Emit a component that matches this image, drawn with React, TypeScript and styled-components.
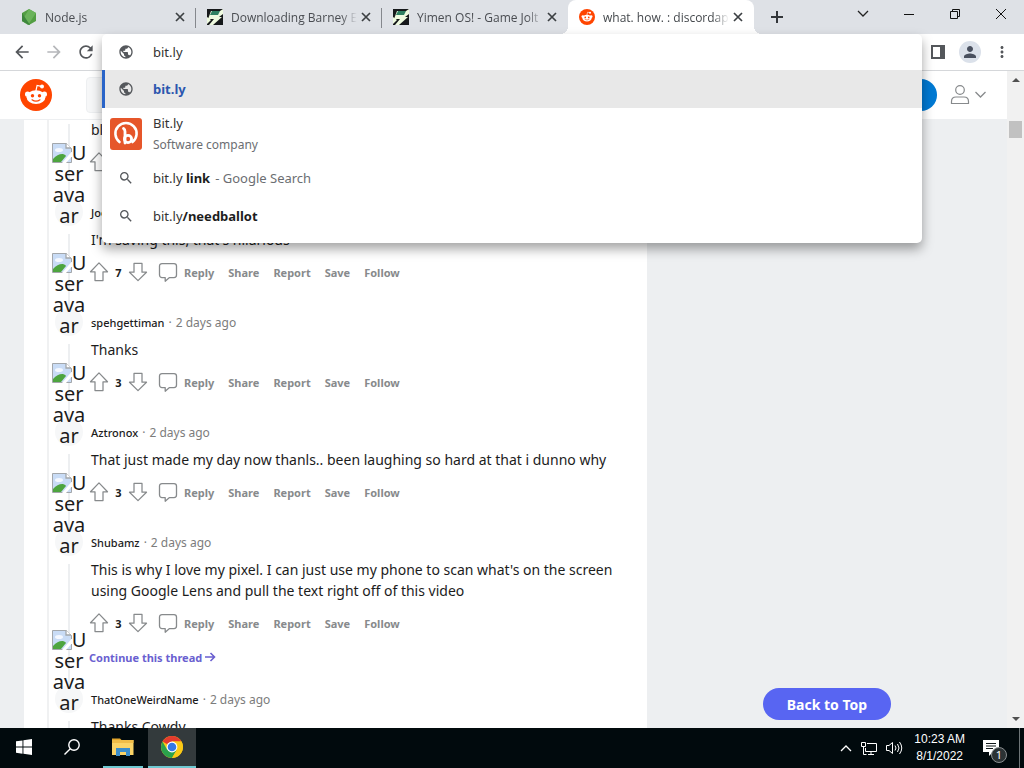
import React from "react";
import styled, { createGlobalStyle, css } from "styled-components";
import { MdPublic, MdSearch, MdPerson, MdArrowBack, MdArrowForward, MdRefresh, MdMoreVert } from "react-icons/md";

const GlobalStyle = createGlobalStyle`
  * { box-sizing: border-box; }
  body { margin: 0; font-family: "Noto Sans", "Open Sans", sans-serif; color: #1c1c1c; }
  button { font: inherit; color: inherit; background: none; border: 0; padding: 0; cursor: pointer; }
  a { color: inherit; text-decoration: none; }
  svg { display: block; flex: none; }
`;

const Desktop = styled.div`
  display: flex;
  flex-direction: column;
  height: 100vh;
  overflow: hidden;
`;

/* ---------- tab strip ---------- */
const TabStrip = styled.header`
  display: flex;
  flex: none;
  height: 34px;
  padding-left: 10px;
  background: #dee1e6;
`;
const Tab = styled.div<{ $active?: boolean; $divider?: boolean }>`
  display: flex;
  align-items: center;
  flex: 0 1 186px;
  min-width: 0;
  padding: 0 11px;
  font-family: "Open Sans", sans-serif;
  font-size: 12px;
  color: #4a4d52;
  position: relative;
  ${(p) =>
    p.$active &&
    css`
      background: #fff;
      border-radius: 8px 8px 0 0;
      color: #45494d;
      &::before, &::after {
        content: "";
        position: absolute;
        bottom: 0;
        width: 8px;
        height: 8px;
      }
      &::before { left: -8px; background: radial-gradient(circle at 0 0, transparent 8px, #fff 8px); }
      &::after { right: -8px; background: radial-gradient(circle at 100% 0, transparent 8px, #fff 8px); }
    `}
  ${(p) =>
    p.$divider &&
    css`
      &::after {
        content: "";
        position: absolute;
        right: 0;
        top: 8px;
        width: 1px;
        height: 20px;
        background: #85888d;
      }
    `}
`;
const TabTitle = styled.span`
  flex: 1;
  min-width: 0;
  margin: 0 4px 0 8px;
  overflow: hidden;
  white-space: nowrap;
  mask-image: linear-gradient(to right, #000 calc(100% - 16px), transparent);
`;
const IconButton = styled.button<{ $w?: number }>`
  display: flex;
  align-items: center;
  justify-content: center;
  flex: none;
  gap: 3px;
  width: ${(p) => (p.$w ? `${p.$w}px` : "auto")};
`;
const WindowControls = styled.div`
  display: flex;
  margin-left: auto;
  height: 28px;
`;

/* ---------- toolbar and suggestions ---------- */
const Toolbar = styled.div`
  display: flex;
  align-items: center;
  justify-content: space-between;
  flex: none;
  height: 37px;
  padding: 0 6px;
  background: #fff;
  border-bottom: 1px solid #d5d7da;
  color: #54575b;
  position: relative;
  z-index: 5;
`;
const ToolGroup = styled.div`
  display: flex;
  align-items: center;
`;
const Profile = styled.span`
  display: flex;
  align-items: center;
  justify-content: center;
  width: 22px;
  height: 22px;
  border-radius: 50%;
  background: #dbe1ea;
  color: #49505f;
`;
const Omnibox = styled.div`
  position: absolute;
  top: 0;
  left: 102px;
  right: 102px;
  padding-bottom: 8px;
  background: #fff;
  border-radius: 5px;
  box-shadow: 0 6px 12px rgba(0, 0, 0, 0.36);
  font-size: 13px;
  color: #333;
`;
const OmniRow = styled.div<{ $tall?: boolean; $selected?: boolean }>`
  display: grid;
  grid-template-columns: 48px 1fr;
  align-items: center;
  height: ${(p) => (p.$tall ? 51 : 38)}px;
  ${(p) =>
    p.$selected &&
    css`
      background: #e8e8e8;
      box-shadow: inset 3px 0 #2964c8;
      color: #2b56ae;
      font-weight: 700;
    `}
  svg { margin: 0 auto; color: #55585c; }
`;
const OmniField = styled(OmniRow).attrs({ as: "label" })`
  height: 36px;
`;
const OmniInput = styled.input`
  width: 100%;
  border: 0;
  outline: 0;
  padding: 0 3px;
  background: none;
  font: inherit;
  color: inherit;
`;
const OmniText = styled.div`
  padding-left: 3px;
  line-height: 21px;
  b { color: #1d1d1d; }
`;
const Source = styled.span`
  padding-left: 5px;
  color: #6b6e72;
`;
const Description = styled.div`
  font-size: 12px;
  color: #6b6e72;
`;

/* ---------- page ---------- */
const Page = styled.div`
  display: flex;
  flex: 1;
  min-height: 0;
`;
const Site = styled.div`
  display: flex;
  flex-direction: column;
  flex: 1;
  min-width: 0;
  overflow: hidden;
  background: #edeff1;
`;
const SiteHeader = styled.div`
  display: flex;
  align-items: center;
  flex: none;
  height: 49px;
  padding: 0 20px;
  background: #fff;
  border-bottom: 1px solid #edeff1;
  position: relative;
  z-index: 2;
`;
const SearchBox = styled.input`
  flex: 1;
  height: 36px;
  margin: 0 40px 0 34px;
  border: 1px solid #edeff1;
  border-radius: 4px;
  background: #f6f7f8;
`;
const LogIn = styled.button`
  width: 96px;
  height: 32px;
  margin-right: 12px;
  border-radius: 16px;
  background: #0079d3;
`;
const Columns = styled.div`
  display: flex;
  flex: 1;
  min-height: 0;
`;
const Thread = styled.main`
  flex: 1;
  margin: -32px 0 0 24px;
  padding-left: 23px;
  background: #fff;
`;
const CommentList = styled.div`
  padding-left: 4px;
  border-left: 2px solid #f0f1f2;
`;
const Sidebar = styled.aside`
  display: flex;
  flex: none;
  width: 360px;
  align-items: flex-end;
  justify-content: center;
  padding-bottom: 8px;
`;
const BackToTop = styled.button`
  width: 128px;
  height: 32px;
  border-radius: 16px;
  background: #5865f2;
  color: #fff;
  font-size: 14px;
  font-weight: 700;
`;
const CommentRow = styled.article`
  display: grid;
  grid-template-columns: 30px 1fr;
  column-gap: 8px;
`;
const Rail = styled.div`
  display: flex;
  flex-direction: column;
  align-items: center;
  padding-left: 2px;
`;
const Avatar = styled.div`
  position: relative;
  flex: none;
  width: 28px;
  height: 28px;
  border-radius: 50%;
  background: #f6f7f8;
`;
const AltText = styled.div`
  position: absolute;
  bottom: 0;
  left: 50%;
  width: 36px;
  margin-left: -18px;
  font-size: 20px;
  line-height: 21px;
  text-align: center;
  white-space: nowrap;
  z-index: 1;
`;
const AltLine = styled.span`
  display: flex;
  justify-content: center;
`;
const RailLine = styled.div`
  flex: 1;
  width: 2px;
  margin-top: 8px;
  background: #edeff1;
`;
const CommentBody = styled.div<{ $tight?: boolean }>`
  padding-bottom: ${(p) => (p.$tight ? 10 : 20)}px;
`;
const Byline = styled.div`
  display: flex;
  align-items: center;
  height: 28px;
  gap: 4px;
  font-size: 12px;
  color: #7c7c7c;
`;
const Author = styled.a`
  font-size: 11px;
  font-weight: 500;
  color: #1c1c1c;
`;
const CommentText = styled.p`
  margin: 0;
  padding: 3px 0 6px;
  max-width: 540px;
  font-size: 14px;
  line-height: 21px;
`;
const Actions = styled.div`
  display: flex;
  align-items: center;
  height: 32px;
  gap: 14px;
  margin-left: -2px;
  font-size: 11px;
  font-weight: 700;
  color: #878a8c;
`;
const Votes = styled.div`
  display: flex;
  align-items: center;
  margin-right: -4px;
`;
const Score = styled.span`
  width: 19px;
  text-align: center;
  color: #1c1c1c;
`;
const ActionButton = styled.button`
  display: flex;
  align-items: center;
  gap: 6px;
`;
const Continue = styled.a`
  display: flex;
  align-items: center;
  gap: 2px;
  height: 36px;
  margin-left: -2px;
  font-size: 11px;
  font-weight: 700;
  color: #6a5fd0;
`;
const Scrollbar = styled.div`
  display: flex;
  flex-direction: column;
  align-items: center;
  justify-content: space-between;
  flex: none;
  width: 17px;
  padding: 6px 0;
  background: #f1f1f1;
`;
const ScrollTrack = styled.div`
  flex: 1;
  width: 13px;
  padding-top: 39px;
  &::before { content: ""; display: block; height: 17px; background: #c1c1c1; }
`;

/* ---------- taskbar ---------- */
const Taskbar = styled.footer`
  display: flex;
  flex: none;
  height: 40px;
  background: #010a0d;
  color: #fff;
`;
const TaskButton = styled.button<{ $running?: boolean; $active?: boolean }>`
  display: flex;
  align-items: center;
  justify-content: center;
  width: ${(p) => (p.$running ? 40 : 48)}px;
  margin: 0 ${(p) => (p.$running ? "5px 0 7px" : 0)};
  border-bottom: 2px solid ${(p) => (p.$running || p.$active ? "#6fc9d2" : "transparent")};
  background: ${(p) => (p.$active ? "#333a3c" : "none")};
`;
const Tray = styled.div`
  display: flex;
  align-items: center;
  gap: 8px;
  margin-left: auto;
  padding-right: 10px;
`;
const Clock = styled.time`
  margin: 0 10px 0 3px;
  font-family: "Liberation Sans", "Open Sans", sans-serif;
  font-size: 12px;
  line-height: 17px;
  text-align: center;
`;
const Notice = styled.div`
  position: relative;
  width: 26px;
`;
const Badge = styled.span`
  position: absolute;
  left: 8px;
  top: 7px;
  width: 16px;
  height: 16px;
  border: 1px solid #8a8f91;
  border-radius: 50%;
  background: #2b3234;
  font-size: 11px;
  line-height: 14px;
  text-align: center;
`;
const ShowDesktop = styled.div`
  width: 5px;
  border-left: 1px solid #6d7577;
`;

/* ---------- drawings ---------- */
const Snoo = ({ size }: { size: number }) => (
  <svg width={size} height={size} viewBox="0 0 32 32">
    <circle cx="16" cy="16" r="16" fill="#ff4500" />
    <path d="M15.9 12l1.2-5.6 4.2.9" fill="none" stroke="#fff" strokeWidth="1.2" />
    <circle cx="22" cy="7.6" r="2" fill="#fff" />
    <circle cx="7.6" cy="15.2" r="2.6" fill="#fff" />
    <circle cx="24.4" cy="15.2" r="2.6" fill="#fff" />
    <ellipse cx="16" cy="18.2" rx="9.4" ry="6.9" fill="#fff" />
    <circle cx="12.5" cy="16.8" r="1.7" fill="#ff4500" />
    <circle cx="19.5" cy="16.8" r="1.7" fill="#ff4500" />
    <path d="M12 20.8q4 2.8 8 0" fill="none" stroke="#ff4500" strokeWidth="1.2" strokeLinecap="round" />
  </svg>
);
const NodeIcon = () => (
  <svg width="16" height="16" viewBox="0 0 16 16">
    <path d="M8 0l7 4v8l-7 4-7-4V4z" fill="#539e43" />
    <path d="M8 0l7 4-8 12-6-4z" fill="#6bb35b" />
    <path d="M1 4l8 12H8l-7-4z" fill="#3e863d" />
  </svg>
);
const JoltIcon = () => (
  <svg width="16" height="16" viewBox="0 0 16 16">
    <path d="M0 0h16v16H0z" fill="#16191b" />
    <path d="M4 2h9l3-2v5l-4 3h3l-9 8H2l5-6H1z" fill="#effbe0" />
    <path d="M5 2h8l-2 4H3z" fill="#2f8062" />
    <path d="M0 8l4 3-4 4z" fill="#effbe0" />
  </svg>
);
const Cross = () => (
  <svg width="10" height="10" viewBox="0 0 10 10" stroke="#3c4043" strokeWidth="1.7">
    <path d="M1 1l8 8M9 1L1 9" />
  </svg>
);
const BitlyIcon = () => (
  <svg width="32" height="32" viewBox="0 0 32 32">
    <rect width="32" height="32" rx="3" fill="#e6562a" />
    <g fill="none" stroke="#fff">
      <path d="M9.500 24A10.600 10.600 0 1 1 22.500 24" strokeWidth="2.600" strokeLinecap="round" />
      <path d="M13.500 10.500q1.500 1 1.500 3V25" strokeWidth="2.800" strokeLinecap="round" />
      <circle cx="18" cy="21" r="3.600" strokeWidth="2.800" />
    </g>
  </svg>
);
const Vote = ({ down }: { down?: boolean }) => (
  <svg width="20" height="20" viewBox="0 0 20 20" fill="none" stroke="#878a8c" strokeWidth="1.250" strokeLinejoin="round">
    <path d={down ? "M10 18.6L1.500 10.200H6V1.400h8v8.800h4.500z" : "M10 .9l8.500 8.900H14v8.700H6V9.800H1.500z"} />
  </svg>
);
const Bubble = () => (
  <svg width="20" height="20" viewBox="0 0 20 20" fill="none" stroke="#878a8c" strokeWidth="1.3" strokeLinejoin="round">
    <path d="M4 1.600h12a2.500 2.500 0 0 1 2.500 2.500v9a2.500 2.500 0 0 1-2.500 2.500h-4.500L7.200 19.200V15.600H4a2.500 2.500 0 0 1-2.500-2.500v-9A2.500 2.500 0 0 1 4 1.600z" />
  </svg>
);
const BrokenImage = () => (
  <svg width="20" height="21" viewBox="0 0 20 21">
    <path d="M.5 1.500h14l5 5v14H.5z" fill="#c9dcf6" stroke="#a3a7ab" />
    <ellipse cx="7" cy="8" rx="4" ry="2" fill="#f4f8ff" />
    <path d="M1 20v-3q5-5.500 10-5 3 1 3 2l-5 6z" fill="#4da53f" />
    <path d="M21 8L10 21h4l7-8z" fill="#fff" />
    <path d="M14 1v5h5" fill="#fff" stroke="#a3a7ab" strokeWidth="1.3" />
  </svg>
);
const Chevron = ({ w, up, color }: { w: number; up?: boolean; color: string }) => (
  <svg width={w} height="8" viewBox="0 0 12 8" fill="none" stroke={color} strokeWidth="1.3">
    <path d={up ? "M1 7l5-5 5 5" : "M1 1l5 5 5-5"} />
  </svg>
);
const ChromeIcon = () => (
  <svg width="22" height="22" viewBox="0 0 22 22">
    <circle cx="11" cy="11" r="11" fill="#fbc916" />
    <path d="M11 11L1.500 5.500A11 11 0 0 1 20.500 5.500H11z" fill="#e33b2e" />
    <path d="M1.500 5.500A11 11 0 0 0 11 22l5-8.500H6z" fill="#2ba24c" />
    <path d="M11 5.500h9.500A11 11 0 0 1 11 22l5-8.500z" fill="#fbc916" />
    <circle cx="11" cy="11" r="5.400" fill="#fff" />
    <circle cx="11" cy="11" r="4.300" fill="#3478e5" />
  </svg>
);
const FolderIcon = () => (
  <svg width="22" height="20" viewBox="0 0 22 20">
    <path d="M0 1.500h8l2 2H0z" fill="#e3a62c" />
    <path d="M0 3h21.500v15H0z" fill="#fbd467" />
    <path d="M0 3h21.500v3H0z" fill="#f0bd48" />
    <path d="M4 11h14v8h-4v-4H8v4H4z" fill="#3c8ecb" />
  </svg>
);

const CommentAvatar = () => (
  <Avatar>
    <AltText>
      <AltLine><BrokenImage />U</AltLine>
      <AltLine>ser</AltLine>
      <AltLine>ava</AltLine>
      <AltLine>ar</AltLine>
    </AltText>
  </Avatar>
);

type CommentData = { author: string; text: string; score: number; more?: boolean };
const comments: CommentData[] = [
  { author: "Cowdy", text: "bless you", score: 5 },
  { author: "Jooey", text: "I'm saving this, that's hilarious", score: 7 },
  { author: "spehgettiman", text: "Thanks", score: 3 },
  { author: "Aztronox", text: "That just made my day now thanls.. been laughing so hard at that i dunno why", score: 3 },
  {
    author: "Shubamz",
    text: "This is why I love my pixel. I can just use my phone to scan what's on the screen using Google Lens and pull the text right off of this video",
    score: 3,
    more: true,
  },
  { author: "ThatOneWeirdName", text: "Thanks Cowdy", score: 2 },
];

const Comment = ({ author, text, score, more }: CommentData) => (
  <CommentRow>
    <Rail>
      <CommentAvatar />
      <RailLine />
    </Rail>
    <CommentBody $tight={more}>
      <Byline>
        <Author href="#">{author}</Author>
        <span>·</span>
        <span>2 days ago</span>
      </Byline>
      <CommentText>{text}</CommentText>
      <Actions>
        <Votes>
          <IconButton aria-label="Upvote"><Vote /></IconButton>
          <Score>{score}</Score>
          <IconButton aria-label="Downvote"><Vote down /></IconButton>
        </Votes>
        <ActionButton><Bubble />Reply</ActionButton>
        <ActionButton>Share</ActionButton>
        <ActionButton>Report</ActionButton>
        <ActionButton>Save</ActionButton>
        <ActionButton>Follow</ActionButton>
      </Actions>
      {more && (
        <Continue href="#">
          Continue this thread
          <svg width="12" height="12" viewBox="0 0 12 12" fill="none" stroke="currentColor" strokeWidth="1.6">
            <path d="M1 6h9M6.500 2l4 4-4 4" />
          </svg>
        </Continue>
      )}
    </CommentBody>
  </CommentRow>
);

const tabs = [
  { title: "Node.js", icon: <NodeIcon />, divider: true },
  { title: "Downloading Barney Error", icon: <JoltIcon />, divider: true },
  { title: "Yimen OS! - Game Jolt", icon: <JoltIcon /> },
  { title: "what. how. : discordapp", icon: <Snoo size={16} />, active: true },
];

export default function App() {
  return (
    <Desktop>
      <GlobalStyle />
      <TabStrip>
        {tabs.map((t) => (
          <Tab key={t.title} $active={t.active} $divider={t.divider}>
            {t.icon}
            <TabTitle>{t.title}</TabTitle>
            <IconButton aria-label="Close tab"><Cross /></IconButton>
          </Tab>
        ))}
        <IconButton $w={46} aria-label="New tab">
          <svg width="12" height="12" viewBox="0 0 12 12" stroke="#33363a" strokeWidth="2"><path d="M6 0v12M0 6h12" /></svg>
        </IconButton>
        <WindowControls>
          <IconButton $w={46} aria-label="Search tabs"><Chevron w={12} color="#222" /></IconButton>
          <IconButton $w={46} aria-label="Minimize">
            <svg width="10" height="10" viewBox="0 0 10 10" stroke="#111"><path d="M0 5.500h10" /></svg>
          </IconButton>
          <IconButton $w={46} aria-label="Restore">
            <svg width="10" height="10" viewBox="0 0 10 10" stroke="#111" fill="none"><path d="M.5 2.500h7v7h-7zM2.500 2V.5h7v7H8" /></svg>
          </IconButton>
          <IconButton $w={46} aria-label="Close window">
            <svg width="10" height="10" viewBox="0 0 10 10" stroke="#111"><path d="M0 0l10 10M10 0L0 10" /></svg>
          </IconButton>
        </WindowControls>
      </TabStrip>

      <Toolbar>
        <ToolGroup>
          <IconButton $w={32} aria-label="Back"><MdArrowBack size={20} /></IconButton>
          <IconButton $w={32} aria-label="Forward"><MdArrowForward size={20} color="#b5b7ba" /></IconButton>
          <IconButton $w={32} aria-label="Reload"><MdRefresh size={20} /></IconButton>
        </ToolGroup>
        <ToolGroup>
          <IconButton $w={32} aria-label="Side panel">
            <svg width="14" height="14" viewBox="0 0 14 14" fill="#54575b">
              <path d="M0 0h14v14H0zM2 2v10h7V2z" fillRule="evenodd" />
            </svg>
          </IconButton>
          <IconButton $w={32} aria-label="Profile"><Profile><MdPerson size={18} /></Profile></IconButton>
          <IconButton $w={32} aria-label="Menu"><MdMoreVert size={18} /></IconButton>
        </ToolGroup>
        <Omnibox>
          <OmniField>
            <MdPublic size={16} />
            <OmniInput aria-label="Address" defaultValue="bit.ly" />
          </OmniField>
          <OmniRow $selected><MdPublic size={16} /><OmniText>bit.ly</OmniText></OmniRow>
          <OmniRow $tall>
            <BitlyIcon />
            <OmniText>Bit.ly<Description>Software company</Description></OmniText>
          </OmniRow>
          <OmniRow>
            <MdSearch size={16} />
            <OmniText>bit.ly <b>link</b><Source>- Google Search</Source></OmniText>
          </OmniRow>
          <OmniRow>
            <MdSearch size={16} />
            <OmniText>bit.ly<b>/needballot</b></OmniText>
          </OmniRow>
        </Omnibox>
      </Toolbar>

      <Page>
        <Site>
          <SiteHeader>
            <Snoo size={32} />
            <SearchBox aria-label="Search" />
            <LogIn aria-label="Log in" />
            <IconButton aria-label="Account">
              <svg width="22" height="22" viewBox="0 0 22 22" fill="none" stroke="#878a8c" strokeWidth="1.2">
                <circle cx="11" cy="6" r="4.300" />
                <path d="M2.500 19.500v-2q0-4.500 4.500-4.500h8q4.500 0 4.500 4.500v2z" />
              </svg>
              <Chevron w={13} color="#878a8c" />
            </IconButton>
          </SiteHeader>
          <Columns>
            <Thread>
              <CommentList>
                {comments.map((c) => <Comment key={c.author} {...c} />)}
              </CommentList>
            </Thread>
            <Sidebar><BackToTop>Back to Top</BackToTop></Sidebar>
          </Columns>
        </Site>
        <Scrollbar>
          <svg width="8" height="5" viewBox="0 0 8 5"><path d="M0 5l4-4 4 4z" fill="#505050" /></svg>
          <ScrollTrack />
          <svg width="8" height="5" viewBox="0 0 8 5"><path d="M0 0l4 4 4-4z" fill="#505050" /></svg>
        </Scrollbar>
      </Page>

      <Taskbar>
        <TaskButton aria-label="Start">
          <svg width="16" height="16" viewBox="0 0 16 16" fill="#fff">
            <path d="M0 2.300l6.500-.9v6.200H0zM7.400 1.300L16 0v7.600H7.400zM0 8.500h6.500v6.200L0 13.800zM7.400 8.500H16V16l-8.600-1.200z" />
          </svg>
        </TaskButton>
        <TaskButton aria-label="Search">
          <svg width="16" height="16" viewBox="0 0 16 16" fill="none" stroke="#fff" strokeWidth="1.4">
            <circle cx="10" cy="6" r="5.200" /><path d="M6.300 9.700L.5 15.500" />
          </svg>
        </TaskButton>
        <TaskButton $running aria-label="File Explorer"><FolderIcon /></TaskButton>
        <TaskButton $active aria-label="Chrome"><ChromeIcon /></TaskButton>
        <Tray>
          <Chevron w={12} up color="#fff" />
          <svg width="18" height="14" viewBox="0 0 18 14" fill="none" stroke="#fff">
            <path d="M7 2.500h9.500v8H5.500V7M8 13.500h6M11 10.500v3M1.500 1.500h4v4h-4zM3.500 5.500v8h3" />
          </svg>
          <svg width="17" height="14" viewBox="0 0 17 14" fill="none" stroke="#fff">
            <path d="M.5 4.500H3l3.500-3v11L3 9.500H.5zM9 4.500q2 2.500 0 5M11.500 3q3 4 0 8M13.500 1q4.500 6 0 12" />
          </svg>
          <Clock>10:23 AM<br />8/1/2022</Clock>
          <Notice>
            <svg width="16" height="16" viewBox="0 0 16 16">
              <path d="M0 0h16v12h-6l-4 4v-4H0z" fill="#fff" />
              <path d="M3 3.500h10M3 6h10M3 8.500h7" stroke="#10181a" />
            </svg>
            <Badge>1</Badge>
          </Notice>
        </Tray>
        <ShowDesktop />
      </Taskbar>
    </Desktop>
  );
}
